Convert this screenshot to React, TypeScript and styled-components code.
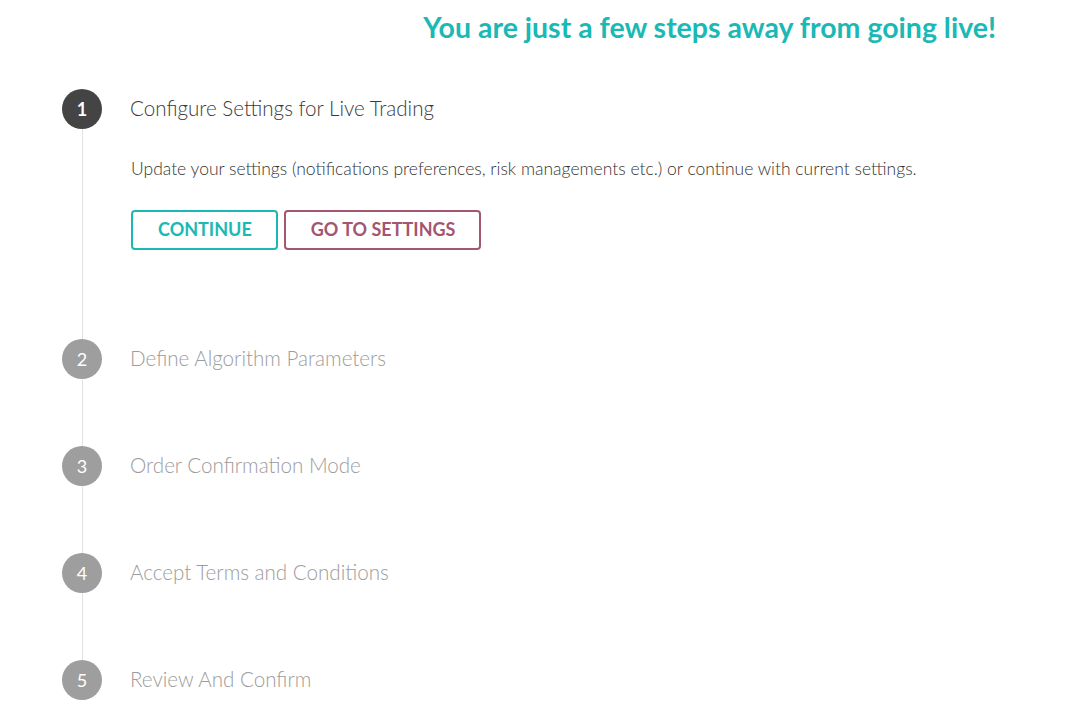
import React from 'react';
import styled, { createGlobalStyle } from 'styled-components';

const GlobalStyle = createGlobalStyle`
  html, body {
    margin: 0;
    padding: 0;
    background: #ffffff;
  }
  body {
    font-family: Lato, "Open Sans", "Liberation Sans", sans-serif;
    color: #444444;
  }
`;

const Page = styled.div`
  display: flex;
  flex-direction: column;
  width: 1075px;
  height: 705px;
  overflow: hidden;
`;

const Header = styled.div`
  display: flex;
  justify-content: flex-end;
  padding: 9px 79px 0 0;
`;

const Headline = styled.h1`
  margin: 0;
  font-size: 28.5px;
  line-height: 36px;
  font-weight: 700;
  color: #1ab9b5;
`;

const StepList = styled.div`
  display: flex;
  flex-direction: column;
  padding: 44px 0 0 62px;
`;

const StepRow = styled.div`
  display: flex;
`;

const Rail = styled.div`
  display: flex;
  flex-direction: column;
  align-items: center;
  width: 40px;
  flex-shrink: 0;
`;

const Circle = styled.div<{ $active: boolean }>`
  display: flex;
  align-items: center;
  justify-content: center;
  width: 40px;
  height: 40px;
  border-radius: 50%;
  background: ${(p) => (p.$active ? '#444444' : '#9e9e9e')};
  color: #ffffff;
  font-size: 18px;
  font-weight: ${(p) => (p.$active ? 700 : 400)};
`;

const Connector = styled.div`
  flex: 1;
  width: 1px;
  background: #e2e2e2;
`;

const Body = styled.div<{ $gap: number }>`
  display: flex;
  flex-direction: column;
  padding: 0 0 ${(p) => p.$gap}px 28px;
`;

const StepTitle = styled.div<{ $active: boolean }>`
  display: flex;
  align-items: center;
  height: 40px;
  margin-top: -1px;
  margin-bottom: 1px;
  font-size: 20.6px;
  font-weight: 300;
  color: ${(p) => (p.$active ? '#3a3a3a' : '#9c9c9c')};
`;

const Description = styled.p`
  margin: 30px 0 0 1px;
  font-size: 17.5px;
  line-height: 20px;
  font-weight: 300;
  color: #333333;
`;

const Actions = styled.div`
  display: flex;
  gap: 6px;
  margin: 31px 0 0 1px;
`;

const OutlineButton = styled.button<{ $color: string }>`
  height: 40px;
  padding: 0 24px 3px 25px;
  border: 2px solid ${(p) => p.$color};
  border-radius: 4px;
  background: #ffffff;
  color: ${(p) => p.$color};
  font-family: Lato, "Liberation Sans", sans-serif;
  font-size: 18px;
  line-height: 20px;
  font-weight: 700;
  cursor: pointer;
`;

const steps = [
  'Configure Settings for Live Trading',
  'Define Algorithm Parameters',
  'Order Confirmation Mode',
  'Accept Terms and Conditions',
  'Review And Confirm',
];

export default function App() {
  const current = 0;
  return (
    <>
      <GlobalStyle />
      <Page>
        <Header>
          <Headline>You are just a few steps away from going live!</Headline>
        </Header>
        <StepList>
          {steps.map((title, index) => {
            const active = index === current;
            const last = index === steps.length - 1;
            return (
              <StepRow key={title}>
                <Rail>
                  <Circle $active={active}>{index + 1}</Circle>
                  {!last && <Connector />}
                </Rail>
                <Body $gap={active ? 89 : 67}>
                  <StepTitle $active={active}>{title}</StepTitle>
                  {active && (
                    <>
                      <Description>
                        Update your settings (notifications preferences, risk
                        managements etc.) or continue with current settings.
                      </Description>
                      <Actions>
                        <OutlineButton $color="#1ab9b5">CONTINUE</OutlineButton>
                        <OutlineButton $color="#a3566f">GO TO SETTINGS</OutlineButton>
                      </Actions>
                    </>
                  )}
                </Body>
              </StepRow>
            );
          })}
        </StepList>
      </Page>
    </>
  );
}
